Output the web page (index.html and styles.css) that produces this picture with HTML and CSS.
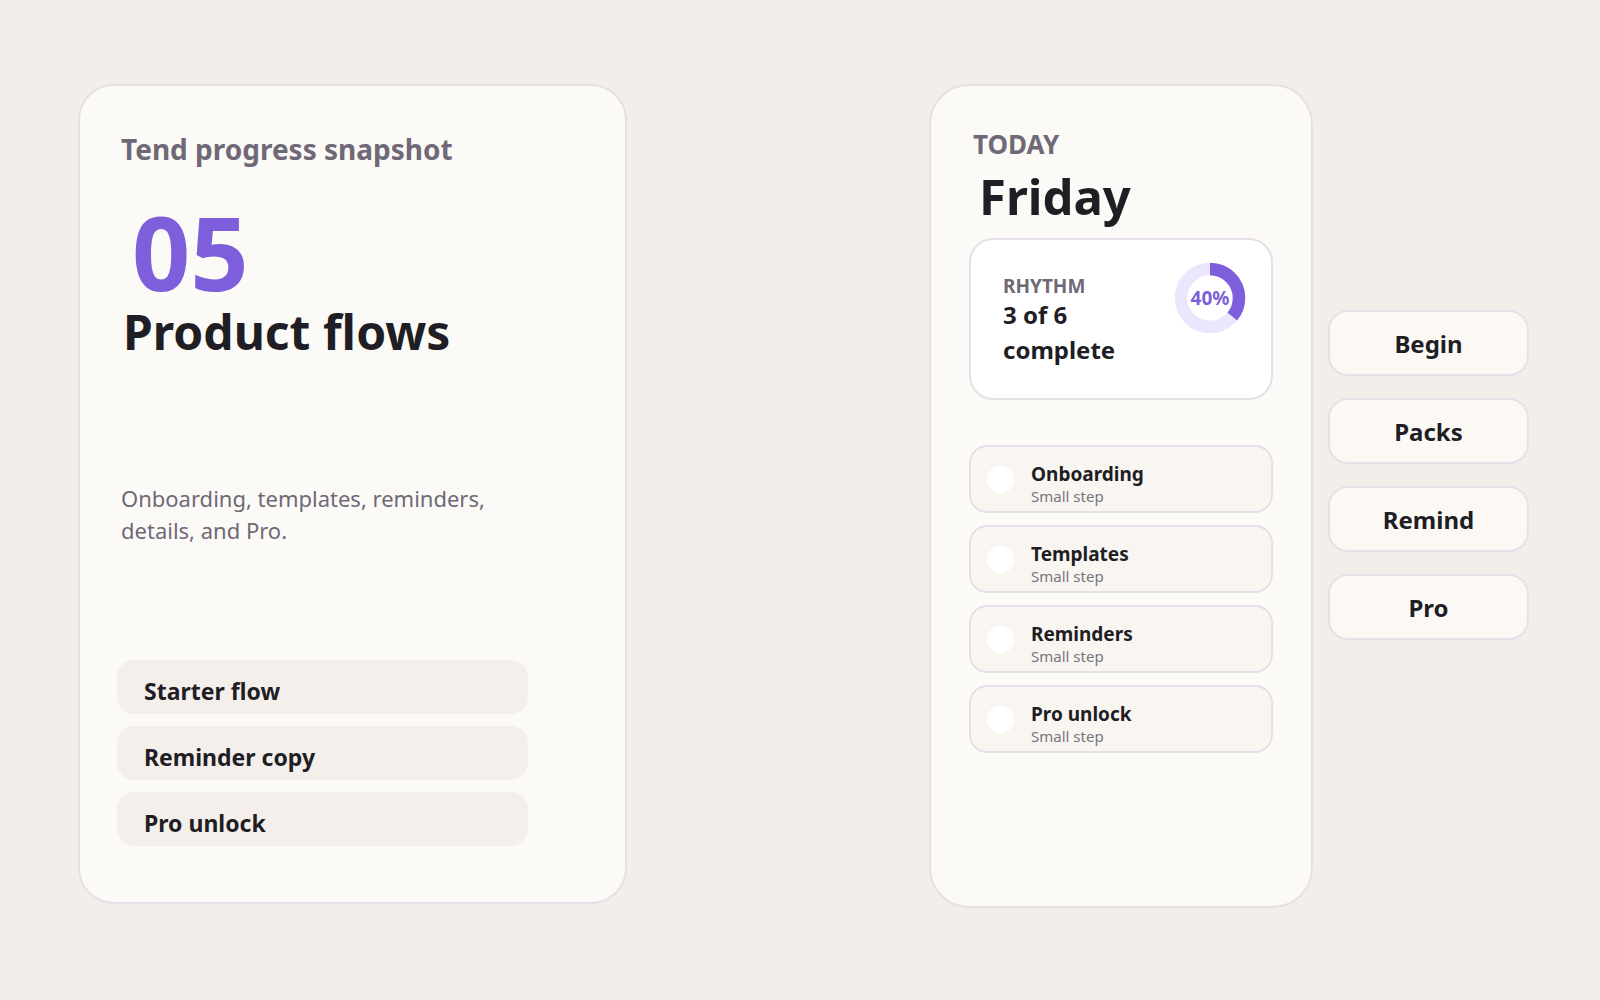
FILE: index.html
```html
<!DOCTYPE html>
<html lang="en">
<head>
    <meta charset="UTF-8">
    <meta name="viewport" content="width=device-width, initial-scale=1.0">
    <title>Tend progress snapshot</title>
    <link rel="stylesheet" href="styles.css">
</head>
<body>

    <main class="board">

        <section class="snapshot">
            <p class="eyebrow">Tend progress snapshot</p>
            <div class="count">05</div>
            <h1 class="headline">Product flows</h1>
            <p class="summary">Onboarding, templates, reminders, details, and Pro.</p>

            <ul class="flow-list">
                <li>Starter flow</li>
                <li>Reminder copy</li>
                <li>Pro unlock</li>
            </ul>
        </section>

        <section class="phone">
            <p class="day-label">TODAY</p>
            <h2 class="day">Friday</h2>

            <div class="rhythm">
                <div class="rhythm-text">
                    <p class="rhythm-label">RHYTHM</p>
                    <p class="rhythm-value">3 of 6 complete</p>
                </div>
                <div class="donut">
                    <svg width="74" height="74" viewBox="0 0 74 74">
                        <circle cx="37" cy="37" r="29" fill="none" stroke="#ece6fc" stroke-width="12.5"/>
                        <circle cx="37" cy="37" r="29" fill="none" stroke="#7d5fdb" stroke-width="12.5"
                                stroke-dasharray="65.6 183" transform="rotate(-90 37 37)"/>
                    </svg>
                    <span class="donut-label">40%</span>
                </div>
            </div>

            <ul class="steps">
                <li class="step">
                    <span class="step-dot"></span>
                    <div class="step-text">
                        <p class="step-title">Onboarding</p>
                        <p class="step-note">Small step</p>
                    </div>
                </li>
                <li class="step">
                    <span class="step-dot"></span>
                    <div class="step-text">
                        <p class="step-title">Templates</p>
                        <p class="step-note">Small step</p>
                    </div>
                </li>
                <li class="step">
                    <span class="step-dot"></span>
                    <div class="step-text">
                        <p class="step-title">Reminders</p>
                        <p class="step-note">Small step</p>
                    </div>
                </li>
                <li class="step">
                    <span class="step-dot"></span>
                    <div class="step-text">
                        <p class="step-title">Pro unlock</p>
                        <p class="step-note">Small step</p>
                    </div>
                </li>
            </ul>
        </section>

        <nav class="quick-actions">
            <button class="action-btn">Begin</button>
            <button class="action-btn">Packs</button>
            <button class="action-btn">Remind</button>
            <button class="action-btn">Pro</button>
        </nav>

    </main>

</body>
</html>
```

FILE: styles.css
```css
body {
    font-family: "Segoe UI", "Noto Sans", sans-serif;
    background: #f3eeea;
    color: #201d24;
    margin: 0;
}
p, h1, h2, ul {
    margin: 0;
    padding: 0;
}
ul {
    list-style: none;
}
.board {
    display: flex;
    align-items: flex-start;
    padding: 84px 0 0 78px;
}

/* left card */
.snapshot {
    box-sizing: border-box;
    width: 549px;
    height: 820px;
    padding: 45px 42px 56px 41px;
    background: #fcfaf6;
    border: 2px solid #e6e0e6;
    border-radius: 36px;
    display: flex;
    flex-direction: column;
}
.eyebrow {
    font-size: 28px;
    font-weight: 700;
    color: #6f6977;
    line-height: 36px;
}
.count {
    font-size: 102px;
    font-weight: 700;
    color: #7d5fdb;
    line-height: 80px;
    margin: 45px 0 10px 11px;
}
.headline {
    font-size: 48px;
    font-weight: 700;
    line-height: 60px;
    margin: 0 0 0 2px;
}
.summary {
    font-size: 22px;
    line-height: 32px;
    color: #6f6977;
    max-width: 400px;
    margin-top: 120px;
}
.flow-list {
    margin: auto -4px 0 -4px;
    display: flex;
    flex-direction: column;
    gap: 12px;
}
.flow-list li {
    width: 411px;
    box-sizing: border-box;
    height: 54px;
    padding: 14px 27px 0 27px;
    background: #f4efeb;
    border-radius: 17px;
    font-size: 23px;
    font-weight: 700;
    line-height: 35px;
}

/* phone card */
.phone {
    box-sizing: border-box;
    width: 384px;
    height: 824px;
    margin-left: 302px;
    padding: 43px 38px 0 38px;
    background: #fcfaf6;
    border: 2px solid #e6e0e6;
    border-radius: 40px;
}
.day-label {
    font-size: 26px;
    font-weight: 700;
    color: #6f6977;
    line-height: 30px;
    margin-left: 4px;
}
.day {
    font-size: 49px;
    font-weight: 700;
    line-height: 62px;
    margin: 6px 0 0 10px;
}
.rhythm {
    box-sizing: border-box;
    height: 162px;
    margin-top: 11px;
    padding: 35px 24px 0 32px;
    background: #ffffff;
    border: 2px solid #e6e0e6;
    border-radius: 24px;
    display: flex;
    justify-content: space-between;
    align-items: flex-start;
}
.rhythm-text {
    width: 140px;
}
.rhythm-label {
    font-size: 19px;
    font-weight: 700;
    color: #6f6977;
    line-height: 22px;
}
.rhythm-value {
    font-size: 24px;
    font-weight: 700;
    line-height: 35px;
}
.donut {
    position: relative;
    width: 74px;
    height: 74px;
    margin-top: -14px;
}
.donut svg {
    display: block;
}
.donut-label {
    position: absolute;
    inset: 0;
    display: flex;
    align-items: center;
    justify-content: center;
    font-size: 19px;
    font-weight: 700;
    color: #7d5fdb;
}
.steps {
    margin-top: 45px;
    display: flex;
    flex-direction: column;
    gap: 12px;
}
.step {
    box-sizing: border-box;
    height: 68px;
    padding: 0 16px;
    background: #f9f6f1;
    border: 2px solid #e6e0ea;
    border-radius: 18px;
    display: flex;
    align-items: center;
    gap: 17px;
}
.step-dot {
    width: 27px;
    height: 27px;
    border-radius: 50%;
    background: #ffffff;
    flex: none;
}
.step-text {
    padding-top: 11px;
}
.step-title {
    font-size: 19px;
    font-weight: 700;
    line-height: 22px;
}
.step-note {
    font-size: 15px;
    color: #7a7482;
    line-height: 22px;
}

/* side buttons */
.quick-actions {
    margin: 226px 0 0 15px;
    display: flex;
    flex-direction: column;
    gap: 22px;
}
.action-btn {
    width: 201px;
    height: 66px;
    background: #fcf9f5;
    border: 2px solid #e6e0ea;
    border-radius: 20px;
    font-family: inherit;
    font-size: 24px;
    font-weight: 700;
    color: #201d24;
    cursor: pointer;
}
.action-btn:hover {
    background: #ffffff;
}
```
